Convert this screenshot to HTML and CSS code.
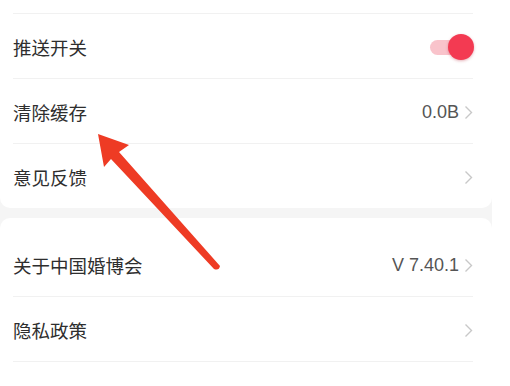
FILE: index.html
```html
<!DOCTYPE html>
<html lang="zh-CN">
<head>
  <meta charset="UTF-8" />
  <meta name="viewport" content="width=device-width, initial-scale=1.0" />
  <title>设置</title>
  <link rel="stylesheet" href="styles.css">
</head>
<body>
  <div class="page">
    <div class="card card-top">
      <div class="row">
        <span class="label">推送开关</span>
        <span class="switch on"><span class="knob"></span></span>
      </div>
      <div class="row">
        <span class="label">清除缓存</span>
        <span class="extra">
          <span class="value">0.0B</span>
          <svg class="chev" width="9" height="15" viewBox="0 0 9 15"><path d="M1.5 1.5 L7.5 7.5 L1.5 13.5" fill="none" stroke="#c8c8c8" stroke-width="1.4"/></svg>
        </span>
      </div>
      <div class="row">
        <span class="label">意见反馈</span>
        <span class="extra">
          <svg class="chev" width="9" height="15" viewBox="0 0 9 15"><path d="M1.5 1.5 L7.5 7.5 L1.5 13.5" fill="none" stroke="#c8c8c8" stroke-width="1.4"/></svg>
        </span>
      </div>
    </div>

    <div class="card card-bottom">
      <div class="row">
        <span class="label">关于中国婚博会</span>
        <span class="extra">
          <span class="value">V 7.40.1</span>
          <svg class="chev" width="9" height="15" viewBox="0 0 9 15"><path d="M1.5 1.5 L7.5 7.5 L1.5 13.5" fill="none" stroke="#c8c8c8" stroke-width="1.4"/></svg>
        </span>
      </div>
      <div class="row">
        <span class="label">隐私政策</span>
        <span class="extra">
          <svg class="chev" width="9" height="15" viewBox="0 0 9 15"><path d="M1.5 1.5 L7.5 7.5 L1.5 13.5" fill="none" stroke="#c8c8c8" stroke-width="1.4"/></svg>
        </span>
      </div>
      <div class="row">
        <span class="label">推荐特权设置</span>
        <span class="extra">
          <svg class="chev" width="9" height="15" viewBox="0 0 9 15"><path d="M1.5 1.5 L7.5 7.5 L1.5 13.5" fill="none" stroke="#c8c8c8" stroke-width="1.4"/></svg>
        </span>
      </div>
    </div>
  </div>

  <!-- annotation arrow drawn over the list -->
  <svg class="arrow" width="510" height="386" viewBox="0 0 510 386">
    <path d="M98 134 L129 145 L119 152 L220 266 Q219 271 214 269 L111 159 L104 167 Z" fill="#ee3b24"/>
  </svg>
</body>
</html>
```

FILE: styles.css
```css
:root {
  --text: #2e2e2e;
  --sub: #555;
  --line: #f1f1f1;
  --bg: #f5f5f5;
  --accent: #f33a52;
  --accent-soft: #f9c3cb;
}
body {
  margin: 0;
  background: #fff;
  font-family: "Noto Sans CJK SC", "Noto Sans", sans-serif;
  overflow: hidden;
}
.page {
  width: 492px;
  background: var(--bg);
  height: 386px;
}
.card {
  background: #fff;
}
.card-top {
  padding-top: 13px;
  border-radius: 0 0 10px 10px;
}
.card-top .row {
  border-top: 1px solid var(--line);
}
.card-bottom {
  margin-top: 10px;
  padding-top: 14px;
  border-radius: 10px 10px 0 0;
}
.card-bottom .row {
  border-bottom: 1px solid var(--line);
}
.row {
  height: 62px;
  margin: 0 19px 0 13px;
  display: flex;
  align-items: center;
  justify-content: space-between;
  padding-top: 2px;
  box-sizing: content-box;
}
.label {
  font-size: 18.5px;
  color: var(--text);
  line-height: 1;
}
.extra {
  display: flex;
  align-items: center;
  gap: 5px;
}
.value {
  font-family: "Liberation Sans", Arial, sans-serif;
  font-size: 18px;
  color: var(--sub);
}
.chev {
  display: block;
}
.switch {
  position: relative;
  width: 40px;
  height: 15px;
  border-radius: 8px;
  background: var(--accent-soft);
  margin-right: 3px;
}
.switch .knob {
  position: absolute;
  right: -4px;
  top: -6px;
  width: 26px;
  height: 26px;
  border-radius: 50%;
  background: var(--accent);
  box-shadow: 0 1px 3px rgba(180, 30, 50, 0.35);
}
.arrow {
  position: absolute;
  left: 0;
  top: 0;
  pointer-events: none;
}
```
